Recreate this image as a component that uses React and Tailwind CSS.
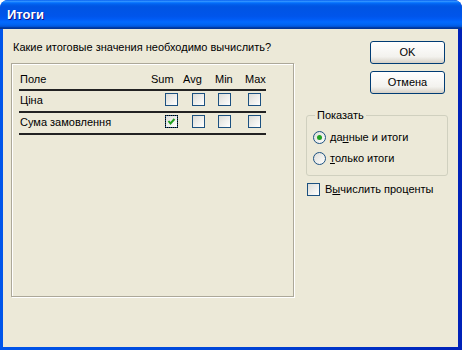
import React from 'react';

const CheckBox = ({ checked, focus }) => (
  <div className="relative w-[13px] h-[13px] shrink-0 border border-[#1c5180] bg-[linear-gradient(135deg,#dcdcd7,#ffffff)]">
    {focus && <div className="absolute inset-[-1px] border border-dotted border-black" />}
    {checked && (
      <svg className="absolute inset-0" width="11" height="11" viewBox="0 0 11 11">
        <path d="M2.5 5 L4.5 7.5 L8.5 3" fill="none" stroke="#21a121" strokeWidth="2" />
      </svg>
    )}
  </div>
);

const Radio = ({ selected }) => (
  <svg width="13" height="13" viewBox="0 0 13 13" className="shrink-0">
    <defs>
      <linearGradient id="rg" x1="0" y1="0" x2="1" y2="1">
        <stop offset="0" stopColor="#dcdcd7" />
        <stop offset="1" stopColor="#ffffff" />
      </linearGradient>
    </defs>
    <circle cx="6.5" cy="6.5" r="6" fill="url(#rg)" stroke="#1c5180" strokeWidth="1" />
    {selected && <circle cx="6.5" cy="6.5" r="2.5" fill="#21a121" />}
  </svg>
);

const Row = ({ name, checked }) => (
  <div>
    <div className="h-[20px] flex items-start">
      <div className="w-[146px] pl-[1px] pt-[3px]">{name}</div>
      <div className="pt-[2px] flex">
        <CheckBox checked={checked} focus={checked} />
        <div className="ml-[14px]"><CheckBox /></div>
        <div className="ml-[13px]"><CheckBox /></div>
        <div className="ml-[17px]"><CheckBox /></div>
      </div>
    </div>
    <div className="h-[2px] bg-[#222]" />
  </div>
);

const Button = ({ children }) => (
  <button className="w-[75px] h-[23px] rounded-[3px] border border-[#003c74] bg-[linear-gradient(180deg,#ffffff,#f3f2ee_70%,#d6d0c5)] text-black self-end mr-[3px]">
    {children}
  </button>
);

export default function App() {
  return (
    <div className="w-[462px] h-[350px] bg-white font-['Liberation_Sans',sans-serif] text-[11px] leading-[13px] text-black">
      <div className="w-full h-full flex flex-col rounded-t-[8px] overflow-hidden bg-[linear-gradient(to_right,#0055ea,#0046d8_50%,#0021b8)]">
        {/* Title bar */}
        <div className="h-[29px] shrink-0 flex items-center pl-[7px] bg-[linear-gradient(180deg,#0058ee_0%,#3593ff_4%,#288eff_6%,#127dff_8%,#036ffc_10%,#0262ee_14%,#0057e5_20%,#0054e3_24%,#0055eb_56%,#005bf5_66%,#026afe_76%,#0062ef_86%,#0052d6_92%,#0040ab_94%,#003092_100%)]">
          <span className="text-white font-bold text-[13px] [text-shadow:1px_1px_#0f1089]">Итоги</span>
        </div>

        {/* Client area */}
        <div className="flex-1 ml-[3px] mr-[4px] mb-[3px] bg-[#ece9d8] flex pt-[12px]">
          {/* Left */}
          <div className="w-[291px] pl-[8px] shrink-0">
            <div className="pl-[2px]">Какие итоговые значения необходимо вычислить?</div>
            <div className="mt-[9px] w-[283px] h-[234px] border border-[#aca899] shadow-[1px_1px_0_#ffffff,inset_1px_1px_0_#ffffff]">
              <div className="ml-[7px] w-[247px]">
                <div className="h-[25px] pt-[9px] flex">
                  <div className="w-[132px] pl-[1px]">Поле</div>
                  <div className="w-[32px]">Sum</div>
                  <div className="w-[32px]">Avg</div>
                  <div className="w-[30px]">Min</div>
                  <div>Max</div>
                </div>
                <div className="h-[2px] bg-[#222]" />
                <Row name="Ціна" />
                <Row name="Сума замовлення" checked />
              </div>
            </div>
          </div>

          {/* Right */}
          <div className="ml-[12px] w-[142px] flex flex-col">
            <Button>OK</Button>
            <div className="mt-[7px] flex flex-col"><Button>Отмена</Button></div>

            <div className="relative mt-[21px] h-[61px] border border-[#d0d0bf] rounded-[3px] pl-[6px] pt-[15px]">
              <div className="absolute -top-[7px] left-[8px] px-[2px] bg-[#ece9d8]">Показать</div>
              <div className="flex items-center">
                <Radio selected />
                <span className="ml-[4px]">да<u>н</u>ные и итоги</span>
              </div>
              <div className="flex items-center mt-[8px]">
                <Radio />
                <span className="ml-[4px]"><u>т</u>олько итоги</span>
              </div>
            </div>

            <div className="mt-[7px] ml-[1px] flex items-center">
              <CheckBox />
              <span className="ml-[5px]">В<u>ы</u>числить проценты</span>
            </div>
          </div>
        </div>
      </div>
    </div>
  );
}
